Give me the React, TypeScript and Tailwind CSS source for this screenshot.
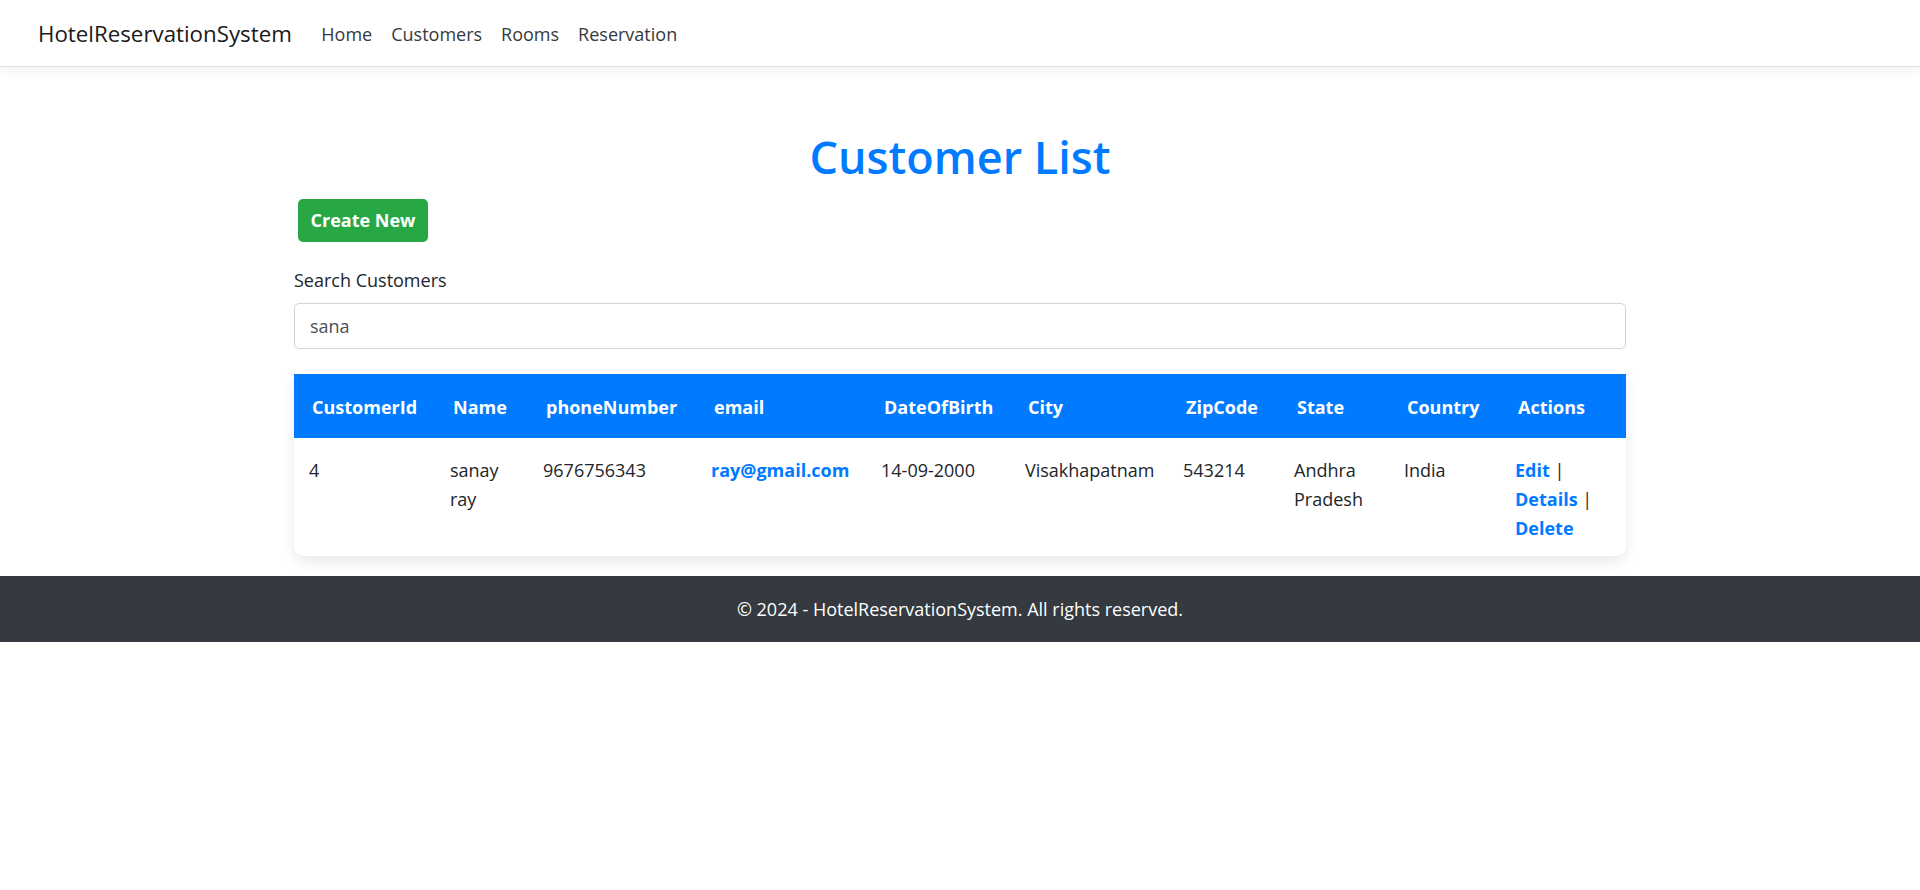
import React, { useState } from "react";

type Customer = {
    id: number;
    name: string;
    phone: string;
    email: string;
    dob: string;
    city: string;
    zip: string;
    state: string;
    country: string;
};

const customers: Customer[] = [
    {
        id: 4,
        name: "sanay ray",
        phone: "9676756343",
        email: "ray@gmail.com",
        dob: "14-09-2000",
        city: "Visakhapatnam",
        zip: "543214",
        state: "Andhra Pradesh",
        country: "India",
    },
];

const columns = [
    { label: "CustomerId", width: "w-[141px]" },
    { label: "Name", width: "w-[93px]" },
    { label: "phoneNumber", width: "w-[168px]" },
    { label: "email", width: "w-[170px]" },
    { label: "DateOfBirth", width: "w-[144px]" },
    { label: "City", width: "w-[158px]" },
    { label: "ZipCode", width: "w-[111px]" },
    { label: "State", width: "w-[110px]" },
    { label: "Country", width: "w-[111px]" },
    { label: "Actions", width: "w-[126px]" },
];

const Navbar = () => (
    <nav className="h-[67px] pt-[2px] flex items-center px-[38px] bg-white border-b border-[#dee2e6] shadow-[0_4px_12px_rgba(0,0,0,0.05)]">
        <a href="#" className="text-[22.3px] text-[#1a1a1a] mr-[20px] leading-none">
            HotelReservationSystem
        </a>
        <ul className="flex items-center">
            {["Home", "Customers", "Rooms", "Reservation"].map((item) => (
                <li key={item}>
                    <a href="#" className="block px-[9.5px] text-[18px] text-[#343a40] leading-none">
                        {item}
                    </a>
                </li>
            ))}
        </ul>
    </nav>
);

const App = () => {
    const [search, setSearch] = useState("sana");

    return (
        <div className="min-h-[890px] bg-white text-[#212529] font-['Segoe_UI','Open_Sans',sans-serif] text-[18px]">
            <Navbar />

            <main className="w-[1332px] mx-auto pt-[63px]">
                <h1 className="text-center text-[45px] leading-[54px] font-semibold text-[#007bff]">
                    Customer List
                </h1>

                <a
                    href="#"
                    className="mt-[15px] ml-[4px] flex items-center justify-center w-[130px] h-[43px] rounded-[5px] bg-[#28a745] text-white font-bold text-[18px]"
                >
                    Create New
                </a>

                <div className="mt-[24px]">
                    <label className="block leading-[29px] mb-[8px]">Search Customers</label>
                    <input
                        value={search}
                        onChange={(e) => setSearch(e.target.value)}
                        className="w-full h-[46px] px-[15px] border border-[#ced4da] rounded-[5px] text-[18px] text-[#495057] outline-none"
                    />
                </div>

                <div className="mt-[25px] rounded-b-[10px] bg-white shadow-[0_6px_14px_rgba(0,0,0,0.09)] overflow-hidden">
                    <table className="w-full table-fixed border-collapse">
                        <colgroup>
                            {columns.map((col) => (
                                <col key={col.label} className={col.width} />
                            ))}
                        </colgroup>
                        <thead>
                            <tr className="bg-[#007bff] text-white">
                                {columns.map((col) => (
                                    <th
                                        key={col.label}
                                        className="text-left font-bold px-[18px] pt-[19px] pb-[16px] leading-[29px] whitespace-nowrap"
                                    >
                                        {col.label}
                                    </th>
                                ))}
                            </tr>
                        </thead>
                        <tbody>
                            {customers
                                .filter((c) => c.name.includes(search))
                                .map((c) => (
                                    <tr key={c.id} className="align-top leading-[28.8px]">
                                        <td className="pl-[15px] pr-[10px] pt-[18px] pb-[14px]">{c.id}</td>
                                        <td className="pl-[15px] pr-[10px] pt-[18px] pb-[14px]">{c.name}</td>
                                        <td className="pl-[15px] pr-[10px] pt-[18px] pb-[14px]">{c.phone}</td>
                                        <td className="pl-[15px] pr-[10px] pt-[18px] pb-[14px]">
                                            <a href="#" className="font-bold text-[#007bff]">{c.email}</a>
                                        </td>
                                        <td className="pl-[15px] pr-[10px] pt-[18px] pb-[14px]">{c.dob}</td>
                                        <td className="pl-[15px] pr-[10px] pt-[18px] pb-[14px] whitespace-nowrap">{c.city}</td>
                                        <td className="pl-[15px] pr-[10px] pt-[18px] pb-[14px]">{c.zip}</td>
                                        <td className="pl-[15px] pr-[10px] pt-[18px] pb-[14px]">
                                            Andhra
                                            <br />
                                            Pradesh
                                        </td>
                                        <td className="pl-[15px] pr-[10px] pt-[18px] pb-[14px]">{c.country}</td>
                                        <td className="pl-[15px] pr-[10px] pt-[18px] pb-[14px]">
                                            <a href="#" className="font-bold text-[#007bff]">Edit</a> |
                                            <br />
                                            <a href="#" className="font-bold text-[#007bff]">Details</a> |
                                            <br />
                                            <a href="#" className="font-bold text-[#007bff]">Delete</a>
                                        </td>
                                    </tr>
                                ))}
                        </tbody>
                    </table>
                </div>
            </main>

            <footer className="mt-[20px] h-[66px] bg-[#343a40] text-white flex items-center justify-center text-[18px]">
                © 2024 - HotelReservationSystem. All rights reserved.
            </footer>
        </div>
    );
};

export default App;
